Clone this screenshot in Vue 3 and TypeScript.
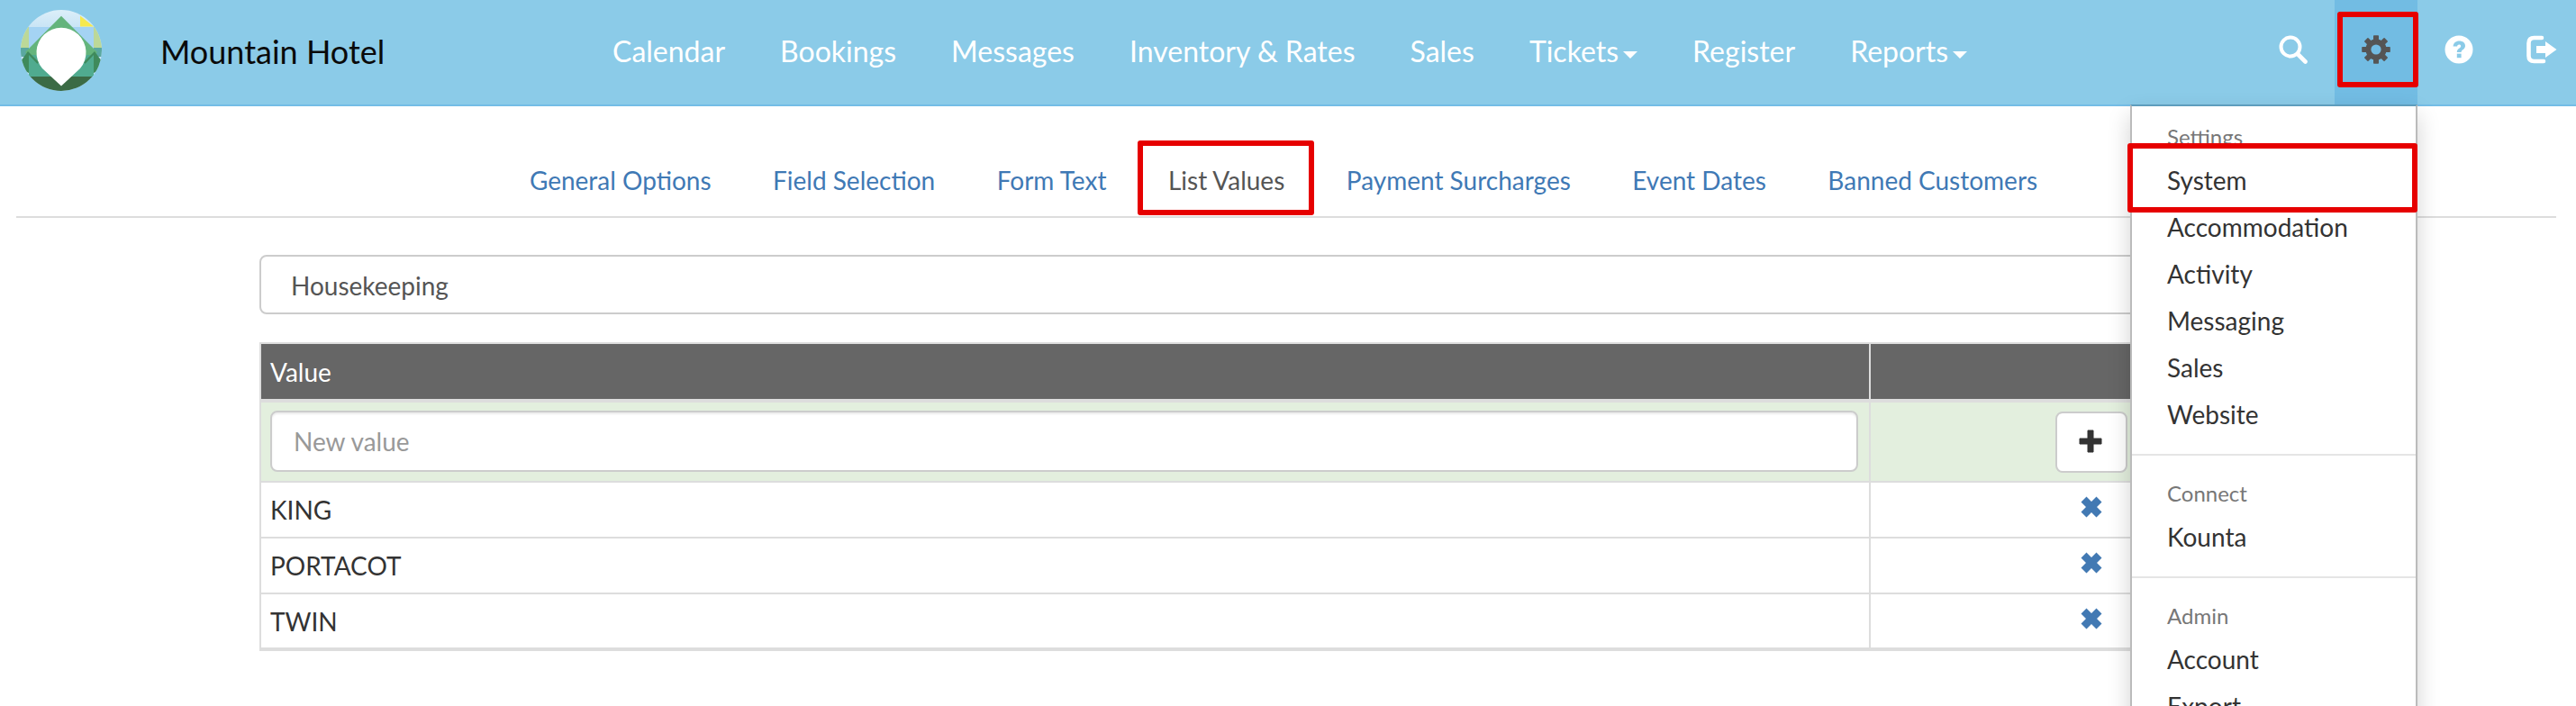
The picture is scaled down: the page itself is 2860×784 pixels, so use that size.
<script setup lang="ts">
const navItems = [
  { label: 'Calendar' }, { label: 'Bookings' }, { label: 'Messages' }, { label: 'Inventory & Rates' },
  { label: 'Sales' }, { label: 'Tickets', caret: true }, { label: 'Register' }, { label: 'Reports', caret: true },
]
const tabs = ['General Options', 'Field Selection', 'Form Text', 'List Values', 'Payment Surcharges', 'Event Dates', 'Banned Customers']
const rows = ['KING', 'PORTACOT', 'TWIN']
const groups = [
  { title: 'Settings', items: ['System', 'Accommodation', 'Activity', 'Messaging', 'Sales', 'Website'] },
  { title: 'Connect', items: ['Kounta'] },
  { title: 'Admin', items: ['Account', 'Export'] },
]
</script>

<template>
  <div class="page">
    <header class="navbar">
      <div class="brand">
        <svg class="logo" viewBox="0 0 90 90" width="90" height="90">
          <defs>
            <clipPath id="lc"><circle cx="45" cy="45" r="45" /></clipPath>
            <linearGradient id="sky" x1="0" y1="0" x2="0" y2="1">
              <stop offset="0" stop-color="#dceff9" />
              <stop offset="0.22" stop-color="#c8e4f5" />
            </linearGradient>
          </defs>
          <g clip-path="url(#lc)">
            <rect width="90" height="90" fill="url(#sky)" />
            <rect x="9" y="19" width="72" height="30" fill="#a4d3f3" />
            <rect x="0" y="19" width="9" height="26" fill="#bcd898" />
            <rect x="81" y="19" width="9" height="26" fill="#bcd898" />
            <rect x="0" y="42" width="9" height="10" fill="#5aa8a0" />
            <rect x="81" y="42" width="9" height="10" fill="#5aa8a0" />
            <polygon points="66,6.5 81,18.5 66,18.5" fill="#f6e94e" />
            <polygon points="45,6.7 85,47 45,87 5,47" fill="#64b47c" />
            <rect x="9" y="50" width="72" height="24" fill="#50ab8f" />
            <polygon points="0,57 8,46 20,58 9,70 0,66" fill="#3f8a5c" />
            <polygon points="90,57 82,46 70,58 81,70 90,66" fill="#3f8a5c" />
            <polygon points="9,50 32,74 58,74 81,50 81,74 9,74" fill="#50ab8f" />
            <rect x="0" y="74" width="90" height="16" fill="#3b6b45" />
            <path d="M45 84.5 L24 65 A27.5 27.5 0 1 1 66 65 Z" fill="#fff" />
          </g>
        </svg>
        <span class="title">Mountain Hotel</span>
      </div>
      <nav class="menu">
        <a v-for="item in navItems" :key="item.label" class="menu-link">
          {{ item.label }}<i v-if="item.caret" class="caret"></i>
        </a>
      </nav>
      <div class="icons">
        <span class="icon-cell">
          <svg viewBox="0 0 32 32" width="32" height="32"><circle cx="13" cy="13" r="10.5" fill="none" stroke="#fff" stroke-width="4" /><path d="M21 21 L29.5 29.5" stroke="#fff" stroke-width="4.6" stroke-linecap="round" /></svg>
        </span>
        <span class="icon-cell active">
          <svg viewBox="-16 -16 32 32" width="32" height="32">
            <g fill="#555">
              <circle r="11.6" />
              <rect v-for="a in [0,45,90,135,180,225,270,315]" :key="a" x="-3" y="-15.8" width="6" height="7" rx="0.8" :transform="`rotate(${a})`" />
            </g>
            <circle r="5.6" fill="#72bce3" />
          </svg>
        </span>
        <span class="icon-cell">
          <svg viewBox="0 0 32 32" width="32" height="32">
            <circle cx="16" cy="16" r="15.5" fill="#fff" />
            <path d="M9.6 12.6 C9.8 8.8 12.6 6.6 16.4 6.6 C20.4 6.6 23 8.8 23 12 C23 16 18.6 16 18.6 19 L13.8 19 C13.8 14.6 18.2 14.6 18.2 12.2 C18.2 11 17.4 10.4 16.2 10.4 C15 10.4 14.2 11.2 14.1 12.6 Z" fill="#8bcbe8" />
            <rect x="13.8" y="20.6" width="4.8" height="4.6" fill="#8bcbe8" />
          </svg>
        </span>
        <span class="icon-cell">
          <svg viewBox="0 0 34 32" width="34" height="32">
            <path d="M17 3 H8.5 C4.5 3 2.5 5 2.5 9 V23 C2.5 27 4.5 29 8.5 29 H19" fill="none" stroke="#fff" stroke-width="4.6" stroke-linecap="round" />
            <path d="M11 12 H21 V7 L33.5 16 L21 25 V20 H11 Z" fill="#fff" />
          </svg>
        </span>
      </div>
    </header>

    <main>
      <div class="tabs">
        <a v-for="t in tabs" :key="t" class="tab" :class="{ current: t === 'List Values' }">{{ t }}</a>
      </div>

      <section class="content">
        <div class="select">Housekeeping</div>
        <table class="grid">
          <thead>
            <tr><th class="c1">Value</th><th></th></tr>
          </thead>
          <tbody>
            <tr class="add">
              <td class="c1"><input class="input" placeholder="New value" /></td>
              <td class="act">
                <button class="btn">
                  <svg viewBox="0 0 26 26" width="26" height="26"><path d="M10 1 H16 V10 H25 V16 H16 V25 H10 V16 H1 V10 H10 Z" fill="#333" stroke="#333" stroke-linejoin="round" /></svg>
                </button>
              </td>
            </tr>
            <tr v-for="r in rows" :key="r">
              <td class="c1">{{ r }}</td>
              <td class="act">
                <svg class="x" viewBox="0 0 24 24" width="24" height="24"><path d="M6.5 0.5 L12 6 L17.5 0.5 L23.5 6.5 L18 12 L23.5 17.5 L17.5 23.5 L12 18 L6.5 23.5 L0.5 17.5 L6 12 L0.5 6.5 Z" fill="#4279b3" /></svg>
              </td>
            </tr>
          </tbody>
        </table>
      </section>
    </main>

    <div class="dropdown">
      <div v-for="g in groups" :key="g.title" class="group">
        <div class="group-title">{{ g.title }}</div>
        <a v-for="i in g.items" :key="i" class="drop-item">{{ i }}</a>
      </div>
    </div>

    <div class="mark mark-gear"></div>
    <div class="mark mark-system"></div>
    <div class="mark mark-tab"></div>
  </div>
</template>

<style>
html, body { margin: 0; overflow: hidden; background: #fff; }
</style>

<style scoped>
.page {
  position: relative;
  width: 2860px;
  height: 784px;
  overflow: hidden;
  font-family: Lato, "Liberation Sans", sans-serif;
  color: #333;
}
.navbar {
  display: flex;
  align-items: stretch;
  height: 116px;
  background: #8bcbe8;
  border-bottom: 2px solid #74bde6;
}
.brand {
  display: flex;
  align-items: center;
  width: 649.5px;
  flex: none;
  padding-left: 23px;
  box-sizing: border-box;
}
.logo { display: block; margin-top: -4px; }
.title {
  margin-left: 65px;
  font-size: 36px;
  color: #0a0a0a;
  margin-top: -2px;
}
.menu { display: flex; align-items: center; flex: 1; }
.menu-link {
  padding: 0 30.5px;
  font-size: 32px;
  color: #fff;
  white-space: nowrap;
  margin-top: -3px;
}
.caret {
  display: inline-block;
  width: 0; height: 0;
  margin-left: 5px;
  vertical-align: middle;
  border-top: 8px solid #fff;
  border-left: 8px solid transparent;
  border-right: 8px solid transparent;
}
.icons { display: flex; align-items: stretch; flex: none; margin-right: -8px; }
.icon-cell {
  width: 92px;
  display: flex;
  align-items: center;
  justify-content: center;
  padding-bottom: 6px;
  box-sizing: border-box;
}
.icon-cell.active { background: #72bce3; }
.tabs {
  display: flex;
  justify-content: center;
  margin: 0 22px 0 18px;
  height: 124px;
  padding: 42px 6px 0 0;
  border-bottom: 2px solid #ddd;
  box-sizing: border-box;
  gap: 68.5px;
  align-items: center;
}
.tab { font-size: 28px; color: #3f79b5; white-space: nowrap; }
.tab.current { color: #555; }
.content { margin: 0 294px 0 288px; padding-top: 41px; }
.select {
  height: 66px;
  box-sizing: border-box;
  border: 2px solid #ccc;
  border-radius: 8px;
  padding: 2px 0 0 33px;
  display: flex;
  align-items: center;
  font-size: 28px;
  color: #555;
}
.grid {
  margin-top: 31px;
  width: 100%;
  border-collapse: collapse;
  table-layout: fixed;
  font-size: 28px;
  border-top: 2px solid #ddd;
  border-left: 2px solid #ddd;
}
.grid th {
  height: 64px;
  padding: 0 12px;
  background: #666;
  color: #fff;
  font-weight: 400;
  text-align: left;
  border-bottom: 4px solid #ddd;
  box-sizing: border-box;
}
.grid th:first-child { border-right: 2px solid #ddd; }
.c1 { width: 1787px; box-sizing: border-box; }
.grid th.c1, .grid td.c1 { padding-left: 10px; }
.grid td {
  height: 62px;
  padding: 0 12px;
  border-bottom: 2px solid #ddd;
  box-sizing: border-box;
}
.grid tbody tr:last-child td { border-bottom-width: 4px; }
.grid td.c1 { border-right: 2px solid #ddd; }
.grid tbody .add td { height: 90px; background: #e3efde; }
.act { text-align: center; }
.act .x { display: block; margin: -6px auto 0; }
.input {
  display: block;
  width: 100%;
  height: 68px;
  margin-top: -1px;
  box-sizing: border-box;
  border: 2px solid #ccc;
  border-radius: 8px;
  padding: 0 24px;
  font: inherit;
  background: #fff;
  outline: none;
  box-shadow: inset 0 2px 2px rgba(0,0,0,0.075);
}
.input::placeholder { color: #999; opacity: 1; }
.btn {
  width: 80px;
  height: 68px;
  border: 2px solid #ccc;
  border-radius: 8px;
  background: #fff;
  padding: 0 2px 2px 0;
  display: inline-flex;
  align-items: center;
  justify-content: center;
  vertical-align: middle;
}
.dropdown {
  position: absolute;
  top: 116px;
  left: 2365px;
  width: 319px;
  box-sizing: border-box;
  background: #fff;
  border: 2px solid #bbb;
  border-top-color: #5e9dbd;
  box-shadow: 0 12px 24px rgba(0,0,0,0.18);
  padding-top: 12px;
}
.group { padding-bottom: 18px; border-bottom: 2px solid #e5e5e5; margin-bottom: 20px; }
.group:last-child { border-bottom: 0; }
.group-title {
  font-size: 24px;
  line-height: 44px;
  color: #777;
  padding-left: 39px;
}
.drop-item {
  display: block;
  padding-left: 39px;
  font-size: 28px;
  line-height: 52px;
  color: #333;
}
.mark {
  position: absolute;
  box-sizing: border-box;
  border: 6px solid #e60000;
  border-radius: 3px;
}
.mark-gear { left: 2595px; top: 13px; width: 90px; height: 84px; }
.mark-system { left: 2362px; top: 159px; width: 322px; height: 77px; }
.mark-tab { left: 1263px; top: 156px; width: 196px; height: 83px; }
</style>
